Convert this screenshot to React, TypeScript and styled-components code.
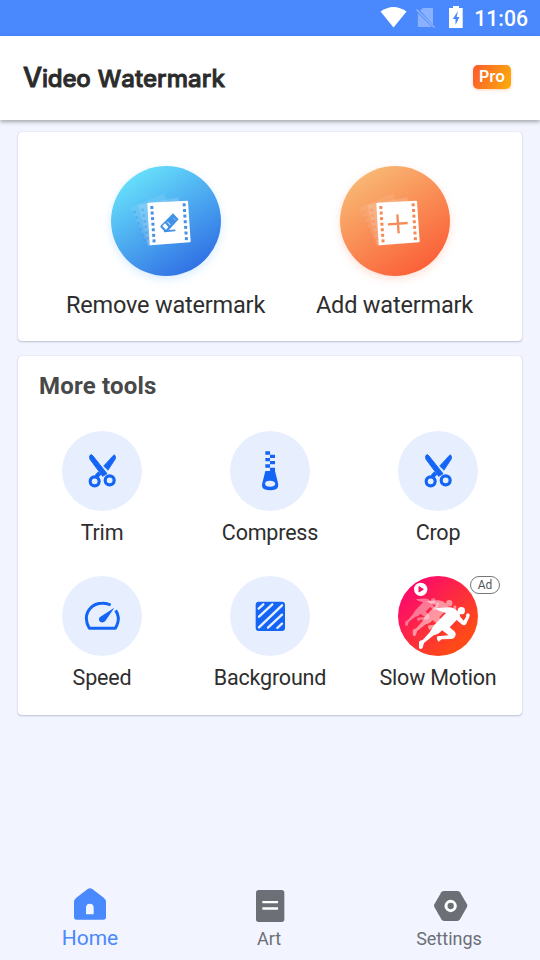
import React from 'react';
import styled, { createGlobalStyle } from 'styled-components';

const GlobalStyle = createGlobalStyle`
  * { box-sizing: border-box; }
  body { margin: 0; background: #f2f5ff; font-family: Roboto, "Noto Sans", sans-serif; }
  svg { display: block; flex: none; }
`;

const Screen = styled.div`
  width: 540px;
  height: 960px;
  display: flex;
  flex-direction: column;
  background: #f2f5ff;
  overflow: hidden;
`;

const StatusBar = styled.div`
  height: 36px;
  flex: none;
  display: flex;
  justify-content: flex-end;
  align-items: center;
  padding-right: 12px;
  background: #4a88fd;
  color: #fff;
`;

const Clock = styled.span`
  margin-left: 10px;
  font-size: 21.2px;
  line-height: 36px;
  font-weight: 500;
  padding-top: 2px;
`;

const AppBar = styled.header`
  height: 84px;
  flex: none;
  display: flex;
  align-items: center;
  justify-content: space-between;
  padding: 0 29px 0 23px;
  background: #fff;
  box-shadow: 0 2px 4px rgba(0, 0, 0, 0.32);
`;

const Title = styled.h1`
  margin: 0;
  display: flex;
  align-items: baseline;
  gap: 7px;
  font-family: Inter, sans-serif;
  font-weight: 500;
  font-size: 24px;
  line-height: 32px;
  color: #2b2b2b;
  -webkit-text-stroke: 0.9px #2b2b2b;
`;

const Word = styled.span<{ $spacing: number; $initial: number }>`
  display: block;
  letter-spacing: ${(p) => p.$spacing}px;
  &::first-letter { font-size: ${(p) => p.$initial}px; }
`;

const ProBadge = styled.span`
  width: 38px;
  height: 24px;
  margin-top: -3px;
  border-radius: 5px;
  background: linear-gradient(110deg, #fb5a2c, #fcae0c);
  box-shadow: 0 1px 3px rgba(255, 120, 40, 0.35);
  color: #fff;
  font: 600 16px/22px Inter, sans-serif;
  text-align: center;
`;

const Card = styled.section<{ $height: number }>`
  height: ${(p) => p.$height}px;
  flex: none;
  margin: 0 18px;
  border-radius: 4px;
  background: #fff;
  box-shadow: 0 1px 2px rgba(60, 64, 100, 0.28), 0 0 1px rgba(60, 64, 100, 0.25);
`;

const Cards = styled.main`
  flex: 1;
  display: flex;
  flex-direction: column;
  gap: 15px;
  padding-top: 12px;
`;

const Actions = styled.div`
  display: grid;
  grid-template-columns: 229px 229px;
  padding: 33.5px 0 0 33px;
`;

const Action = styled.div`
  display: flex;
  flex-direction: column;
  align-items: center;
  font-size: 23.5px;
  letter-spacing: -0.18px;
  line-height: 30px;
  color: #2e2e2e;
  white-space: nowrap;
`;

const ActionDisc = styled.div<{ $from: string; $to: string; $glow: string }>`
  width: 110px;
  height: 110px;
  margin-bottom: 14.5px;
  border-radius: 50%;
  background: linear-gradient(147deg, ${(p) => p.$from} 5%, ${(p) => p.$to} 95%);
  box-shadow: 0 3px 9px ${(p) => p.$glow};
`;

const SectionTitle = styled.h2`
  margin: 0;
  padding: 15px 21px 0;
  font-size: 24px;
  letter-spacing: 0.2px;
  line-height: 30px;
  font-weight: 700;
  color: #484848;
`;

const ToolGrid = styled.div`
  display: grid;
  grid-template-columns: repeat(3, 168px);
  grid-auto-rows: 145px;
  padding-top: 30px;
`;

const Tool = styled.div`
  display: flex;
  flex-direction: column;
  align-items: center;
  font-size: 21.5px;
  letter-spacing: -0.2px;
  line-height: 28px;
  color: #2e2e2e;
  white-space: nowrap;
`;

const ToolDisc = styled.div<{ $bg?: string }>`
  position: relative;
  width: 80px;
  height: 80px;
  margin-bottom: 8px;
  border-radius: 50%;
  background: ${(p) => p.$bg ?? '#e7efff'};
`;

const AdTag = styled.span`
  position: absolute;
  left: 72px;
  top: 0;
  width: 30px;
  height: 18px;
  border: 1px solid #777;
  border-radius: 9px;
  background: #fff;
  color: #555;
  font-size: 12px;
  letter-spacing: 0;
  line-height: 17px;
  text-align: center;
`;

const BottomNav = styled.nav`
  height: 85px;
  flex: none;
  display: grid;
  grid-template-columns: repeat(3, 180px);
`;

const NavItem = styled.div<{ $active?: boolean }>`
  display: flex;
  flex-direction: column;
  align-items: center;
  justify-content: flex-end;
  gap: ${(p) => (p.$active ? 6.5 : 3)}px;
  padding: ${(p) => (p.$active ? '0 0 9px' : '0 2px 9px 0')};
  font-size: ${(p) => (p.$active ? 21 : 18)}px;
  line-height: 25px;
  color: ${(p) => (p.$active ? '#4a88fd' : '#6d6f77')};

  svg {
    margin-left: ${(p) => (p.$active ? 0 : 4)}px;
  }
`;

const holes = [0, 1, 2, 3, 4, 5, 6];

function Film({ tint, children }: { tint: string; children: React.ReactNode }) {
  return (
    <svg width="110" height="110" viewBox="46 46 330 330">
      <g fill="#fff">
        <path opacity=".09" d="M104 172 L205 128 L250 255 L158 288Z" />
        <path opacity=".15" d="M128 163 L248 140 L266 265 L158 285Z" />
      </g>
      <g fill={tint} opacity=".4">
        {holes.slice(0, 6).map((i) => (
          <React.Fragment key={i}>
            <rect x={113 + i * 6} y={180 + i * 17} width="8" height="8" />
            <rect x={137 + i * 3} y={174 + i * 17} width="8" height="8" />
          </React.Fragment>
        ))}
      </g>
      <path d="M158 156 L274 150 Q277 150 277 153 L285 272 Q285 275 282 275 L165 284 Q162 284 162 281 L155 159 Q155 156 158 156Z" fill="#fff" />
      <g fill={tint}>
        {holes.map((i) => (
          <React.Fragment key={i}>
            <rect x={164 + i * 1.1} y={166 + i * 16.7} width="9" height="9" />
            <rect x={261 + i * 1.1} y={158 + i * 16.9} width="9" height="9" />
          </React.Fragment>
        ))}
      </g>
      {children}
    </svg>
  );
}

const Eraser = () => (
  <g>
    <path d="M232 188 L249 206 L215 243 L205 240 L195 230 Q193 227 196 224Z" fill="#4191e8" />
    <path d="M208 218 L218 229 L211 237 L200 226Z" fill="#fff" />
    <path d="M215 213 L224 223" stroke="#fff" strokeWidth="3" />
    <path d="M232 201 L240 209" stroke="#8fc0f3" strokeWidth="3" />
    <path d="M207 242 L237 239" stroke="#4191e8" strokeWidth="5" strokeLinecap="round" />
  </g>
);

const Scissors = () => (
  <svg width="80" height="80" viewBox="36 33 240 240" fill="none" stroke="#1465f5">
    <path d="M192 104 Q199 106 196 117 L174 151 L161 138Z" fill="#1465f5" strokeWidth="2" />
    <path d="M149 159 L139 170" strokeWidth="13" />
    <path d="M121 105 Q117 110 120 118 L158 169 L171 161 L129 108 Q125 102 121 105Z" fill="#1465f5" strokeWidth="3" />
    <circle cx="134" cy="184" r="13.500" strokeWidth="9.500" />
    <circle cx="179" cy="181" r="13.500" strokeWidth="9.500" />
  </svg>
);

const Zipper = () => (
  <svg width="80" height="80" viewBox="45 33 240 240" fill="#1465f5">
    <path d="M151 94h14v10h-14zM165 104h15v10h-15zM151 114h14v10h-14zM165 123h15v10h-15zM151 133h14v10h-14z" />
    <path fillRule="evenodd" d="M151 153 L165 153 L165 143 L180 143 L180 153 L189 189 Q192 202 183 208 Q166 214 148 208 Q138 202 142 189ZM165 182 Q150 182 150 191 Q151 200 165 200 Q180 200 181 191 Q179 182 165 182Z" />
  </svg>
);

const Gauge = () => (
  <svg width="80" height="80" viewBox="36 33 240 240" fill="none" stroke="#1465f5">
    <path d="M182 120 Q169 114 157 115 C125 115 109 140 109 160 Q109 175 118 190 L196 190 Q206 173 205 158 Q204 146 197 136" strokeWidth="9" strokeLinejoin="round" />
    <path d="M193 128 L166 168 Q159 175 151 171 Q144 165 149 157Z" fill="#1465f5" stroke="none" />
  </svg>
);

const Stripes = () => (
  <svg width="80" height="80" viewBox="45 33 240 240">
    <rect x="122" y="110" width="88" height="88" rx="9" fill="#1465f5" />
    <path d="M131 131 L145 118 M132 155 L172 118 M132 187 L201 121 M159 188 L201 149 M187 189 L201 176" stroke="#e7efff" strokeWidth="7" strokeLinecap="round" />
  </svg>
);

const Runner = () => (
  <g>
    <circle cx="274" cy="152" r="11" />
    <path d="M197 147 Q197 143 204 144 L237 142 Q253 143 263 154 Q271 162 271 171 L281 182 L289 169 Q286 160 295 160 Q301 162 298 171 L289 191 Q283 199 275 193 L260 180 L239 202 L253 214 Q260 221 255 230 Q250 238 241 237 L215 238 L206 245 Q198 238 202 229 L236 226 L216 211 Q207 223 191 226 L162 249 L158 263 Q153 270 147 264 L147 245 Q151 241 158 240 L178 218 L192 196 L228 159 L209 153 Z" />
  </g>
);

const SlowMotion = () => (
  <svg width="80" height="80" viewBox="84 48 240 240" fill="#fff">
    <g opacity=".4" transform="translate(9 22) scale(.66)"><Runner /></g>
    <g opacity=".5" transform="translate(2 -1) scale(.86)"><Runner /></g>
    <Runner />
    <circle cx="152" cy="88" r="20" />
    <path d="M147 80 L160 88 L147 96Z" fill="#f5125d" stroke="#f5125d" strokeWidth="3" strokeLinejoin="round" />
  </svg>
);

const tools = [
  { label: 'Trim', icon: <Scissors /> },
  { label: 'Compress', icon: <Zipper /> },
  { label: 'Crop', icon: <Scissors /> },
  { label: 'Speed', icon: <Gauge /> },
  { label: 'Background', icon: <Stripes /> },
  { label: 'Slow Motion', icon: <SlowMotion />, bg: 'linear-gradient(135deg, #fb0a6b 15%, #ff4a17 80%)', ad: true },
];

export default function App() {
  return (
    <Screen>
      <GlobalStyle />
      <StatusBar>
        <svg width="84" height="36" viewBox="380 0 84 36" fill="#fff">
          <path d="M380.5 11.5 Q393.500 2.500 406.500 11.500 L393.500 27.500Z" />
          <g opacity=".35">
            <path d="M423 8 H433 V24.500 L420 10.500ZM417.800 13 L432 27 H417.800Z" />
            <path d="M416.500 9.500 L434.500 27.500" stroke="#fff" strokeWidth="1.700" />
          </g>
          <path fillRule="evenodd" d="M453 6h6v2h3.700v20h-13.700v-20h4zM458 11 L452.700 19h2.800v6l4-8h-2.800z" />
        </svg>
        <Clock>11:06</Clock>
      </StatusBar>
      <AppBar>
        <Title>
          <Word $spacing={-0.2} $initial={27}>Video</Word>
          <Word $spacing={0.05} $initial={23.5}>Watermark</Word>
        </Title>
        <ProBadge>Pro</ProBadge>
      </AppBar>
      <Cards>
        <Card $height={209}>
          <Actions>
            <Action>
              <ActionDisc $from="#6cebfd" $to="#2b65e2" $glow="rgba(90, 180, 255, .25)">
                <Film tint="#4a90e4"><Eraser /></Film>
              </ActionDisc>
              Remove watermark
            </Action>
            <Action>
              <ActionDisc $from="#f8c079" $to="#fb5731" $glow="rgba(255, 130, 90, .25)">
                <Film tint="#f58a57">
                  <path d="M190 221 L249 217 M218 191 L222 248" stroke="#f58a57" strokeWidth="7" />
                </Film>
              </ActionDisc>
              Add watermark
            </Action>
          </Actions>
        </Card>
        <Card $height={359}>
          <SectionTitle>More tools</SectionTitle>
          <ToolGrid>
            {tools.map((t) => (
              <Tool key={t.label}>
                <ToolDisc $bg={t.bg}>
                  {t.icon}
                  {t.ad && <AdTag>Ad</AdTag>}
                </ToolDisc>
                {t.label}
              </Tool>
            ))}
          </ToolGrid>
        </Card>
      </Cards>
      <BottomNav>
        <NavItem $active>
          <svg width="32" height="32" viewBox="102 52 96 96">
            <path fillRule="evenodd" d="M143 55 Q150 50 157 55 L191 81 Q198 87 198 93 V139 Q198 147 190 147 H110 Q102 147 102 139 V93 Q102 87 109 81ZM138 131h23v-20q0-12-11.500-12t-11.500 12z" fill="#4a88fd" />
          </svg>
          Home
        </NavItem>
        <NavItem>
          <svg width="32" height="34" viewBox="645 57 96 102">
            <rect x="648" y="60" width="85" height="96" rx="8" fill="#6d6f77" />
            <path d="M667 96.500h47M667 115.500h47" stroke="#fff" strokeWidth="7" />
          </svg>
          Art
        </NavItem>
        <NavItem>
          <svg width="36" height="34" viewBox="98 57 108 102">
            <path d="M131 63 H171 Q176 63 179 67 L200 103 Q202 107 200 111 L179 148 Q176 153 171 153 H131 Q126 153 123 148 L102 111 Q100 107 102 103 L123 67 Q126 63 131 63Z" fill="#6d6f77" />
            <circle cx="151" cy="108" r="14" fill="none" stroke="#fff" strokeWidth="9" />
          </svg>
          Settings
        </NavItem>
      </BottomNav>
    </Screen>
  );
}
